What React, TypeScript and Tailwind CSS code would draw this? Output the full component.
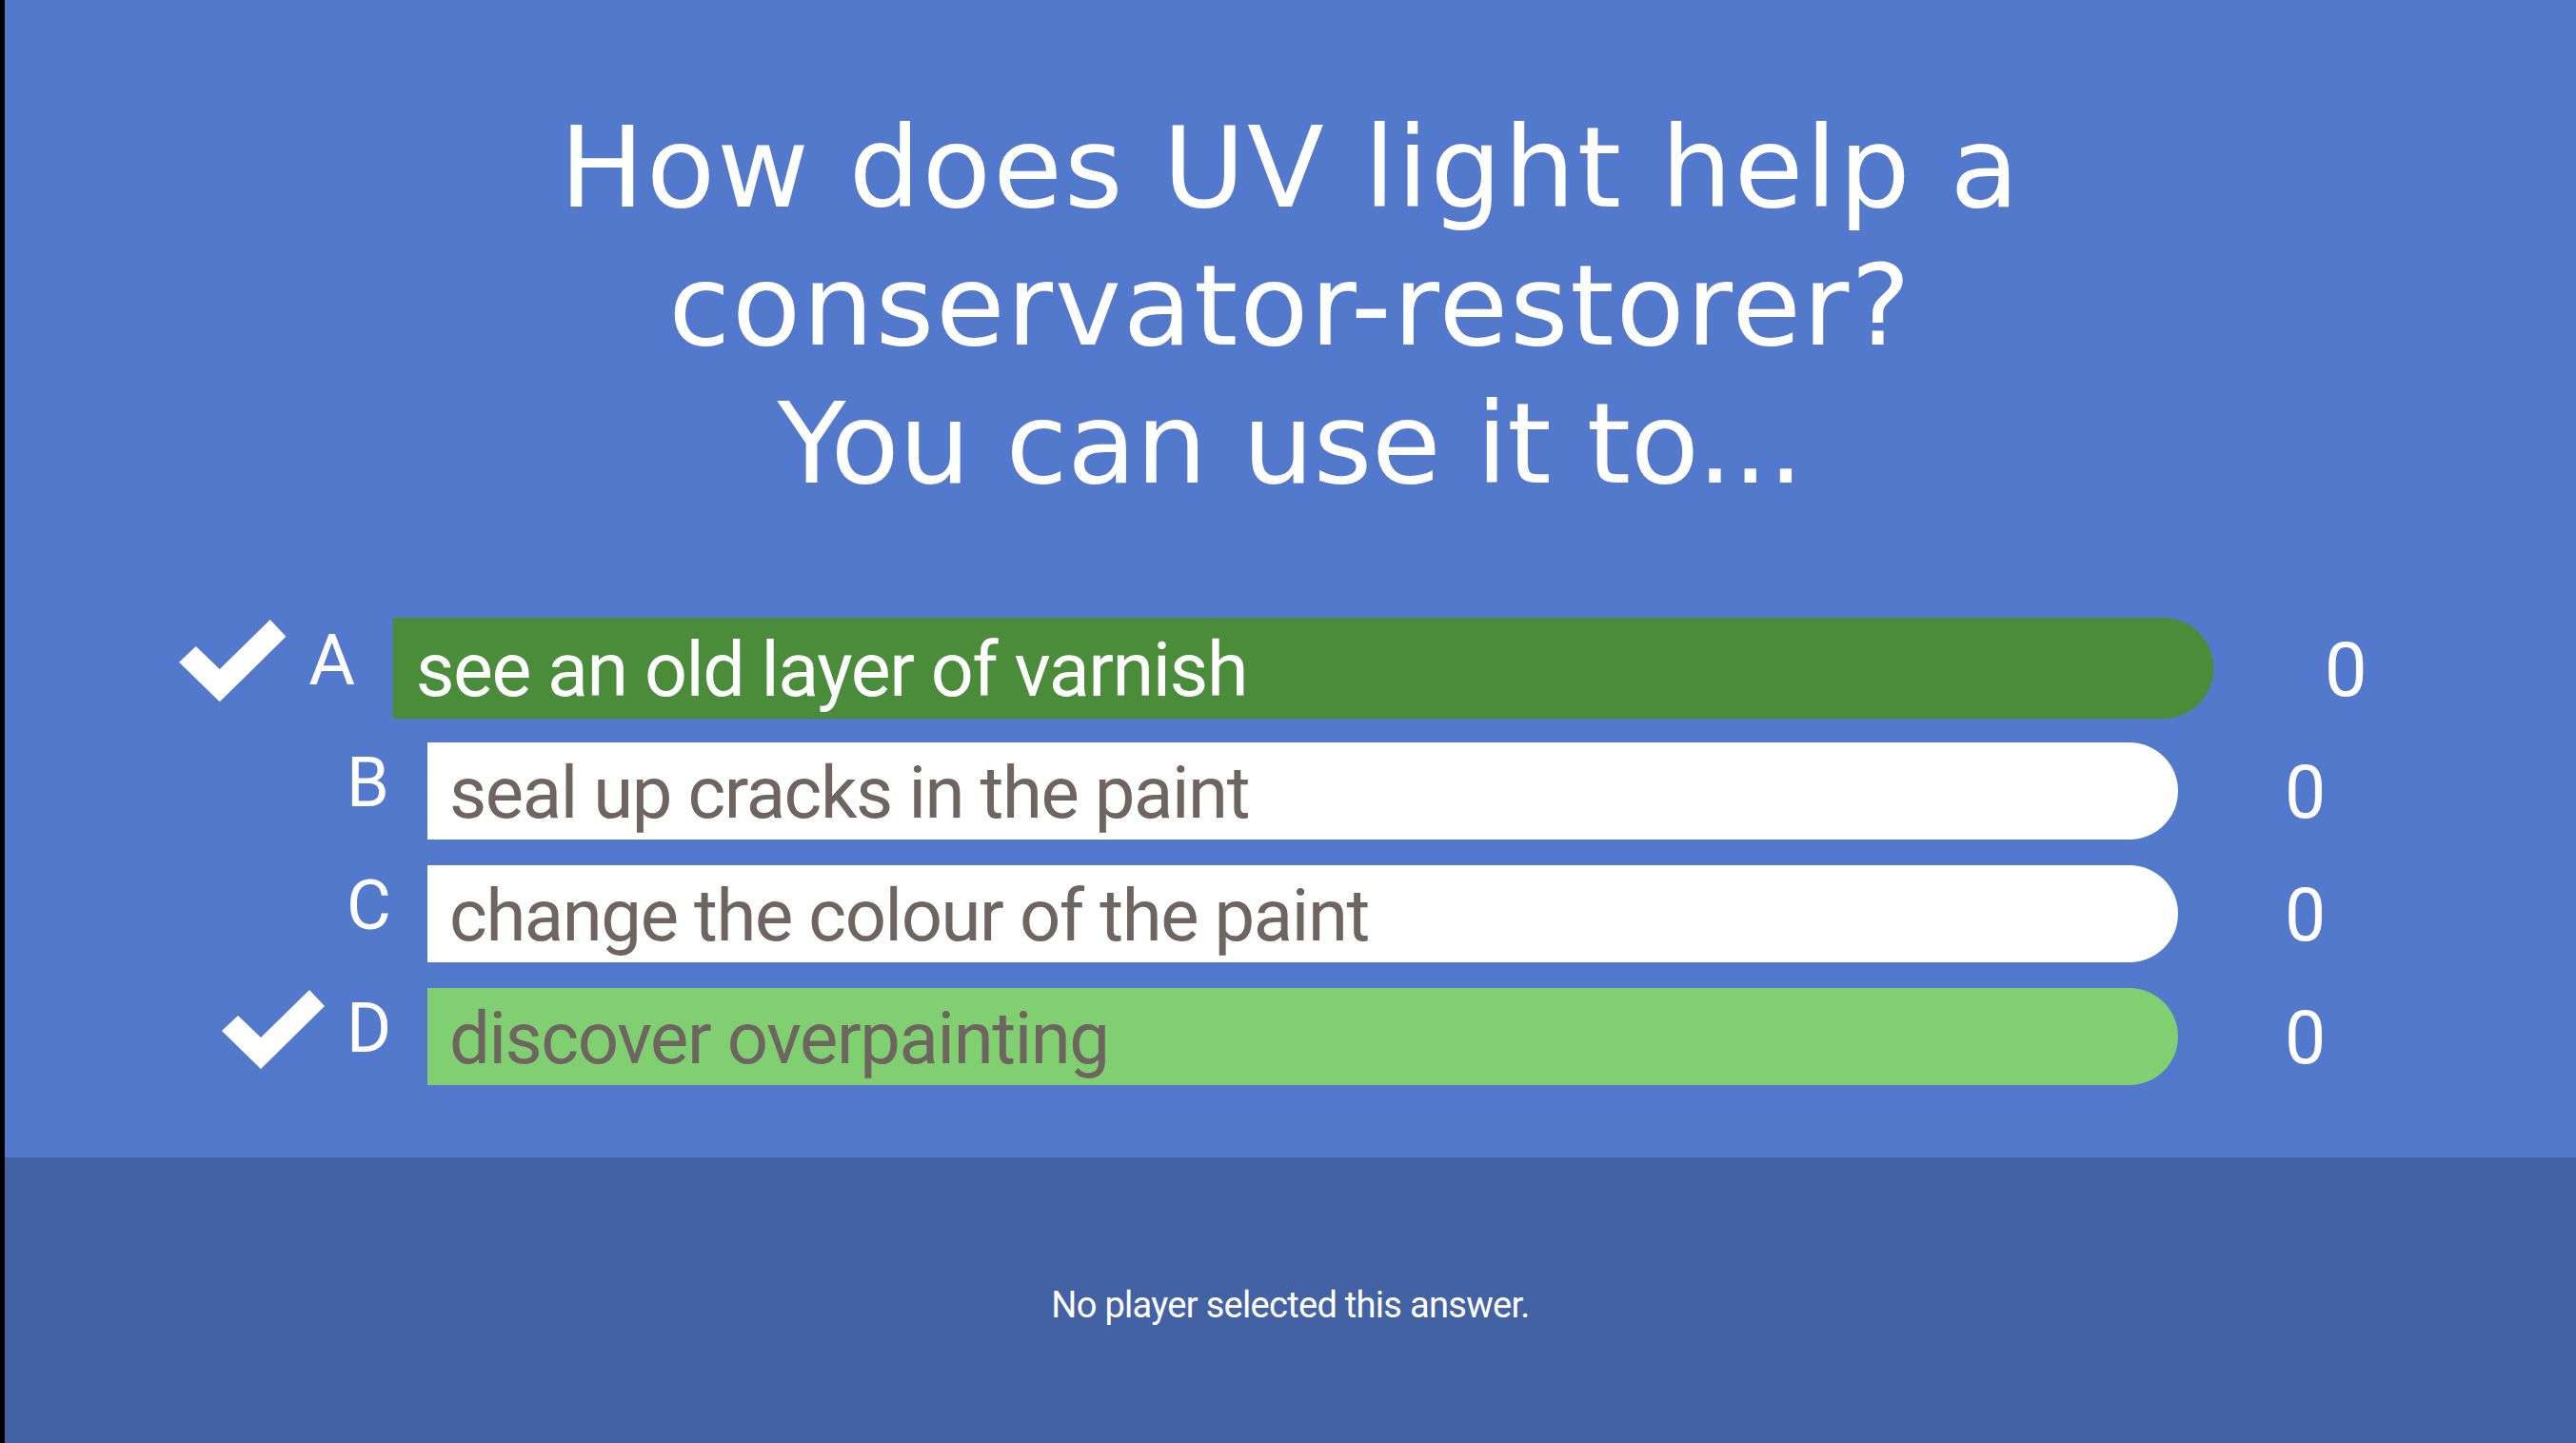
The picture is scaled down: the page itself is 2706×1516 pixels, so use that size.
import React from 'react';

type Answer = {
  letter: string;
  text: string;
  count: number;
  correct: boolean;
  bar: string;
  textColor: string;
  big?: boolean;
};

const answers: Answer[] = [
  { letter: 'A', text: 'see an old layer of varnish', count: 0, correct: true, bar: 'bg-[#4a8c3a]', textColor: 'text-white', big: true },
  { letter: 'B', text: 'seal up cracks in the paint', count: 0, correct: false, bar: 'bg-white', textColor: 'text-[#6e6561]' },
  { letter: 'C', text: 'change the colour of the paint', count: 0, correct: false, bar: 'bg-white', textColor: 'text-[#6e6561]' },
  { letter: 'D', text: 'discover overpainting', count: 0, correct: true, bar: 'bg-[#80cf70]', textColor: 'text-[#6e6561]' },
];

const Check: React.FC = () => (
  <svg viewBox="0 0 108 83" className="w-[108px] h-[83px]" fill="white">
    <polygon points="0,43 17,27 41,50 92,0 108,17 41,83" />
  </svg>
);

const AnswerRow: React.FC<{ a: Answer }> = ({ a }) => {
  return (
    <div className={`flex items-start h-[102px] pl-[228px] ${a.big ? 'scale-[1.04]' : ''}`}>
      <div className="w-[108px] h-[83px] mt-[2px] shrink-0">{a.correct && <Check />}</div>
      <div className="ml-[23px] w-[85px] shrink-0 text-[72px] leading-[86px] text-white font-['Roboto',sans-serif]">
        {a.letter}
      </div>
      <div className={`w-[1839px] h-[102px] shrink-0 rounded-r-full ${a.bar} pl-[23px] pt-[4px]`}>
        <span className={`block text-[76px] leading-[98px] tracking-[-1.4px] whitespace-nowrap font-['Roboto',sans-serif] ${a.textColor}`}>
          {a.text}
        </span>
      </div>
      <div className="ml-[112px] pt-[4px] text-[77px] leading-[98px] text-white font-['Roboto',sans-serif]">
        {a.count}
      </div>
    </div>
  );
};

const App: React.FC = () => {
  return (
    <div className="flex w-[2706px] h-[1516px] overflow-hidden bg-black">
      <div className="w-[5px] shrink-0 bg-black" />
      <div className="flex-1 flex flex-col">
        <div className="h-[1216px] bg-[#5279cb] pt-[104px]">
          <h1 className="text-center text-white text-[118px] leading-[145px] font-normal font-['DejaVu_Sans',sans-serif]">
            <span className="block tracking-[2.2px]">How does UV light help a</span>
            <span className="block tracking-[1.9px]">conservator-restorer?</span>
            <span className="block tracking-[-0.2px]">You can use it to...</span>
          </h1>
          <div className="mt-[112px] flex flex-col gap-[27px]">
            {answers.map((a) => (
              <AnswerRow key={a.letter} a={a} />
            ))}
          </div>
        </div>
        <div className="h-[300px] bg-[#4362a3] flex items-center justify-center pt-[10px]">
          <p className="text-white text-[38px] tracking-[-0.7px] font-['Roboto',sans-serif]">
            No player selected this answer.
          </p>
        </div>
      </div>
    </div>
  );
};

export default App;
